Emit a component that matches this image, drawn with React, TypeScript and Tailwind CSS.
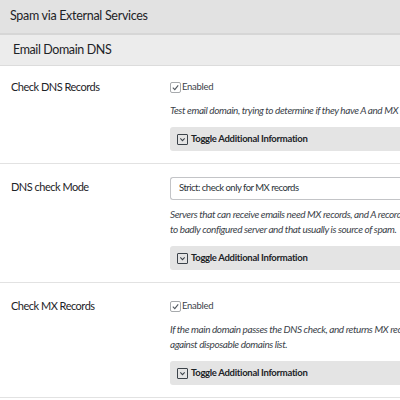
import React from 'react'

const font = { fontFamily: 'Lato, "Open Sans", sans-serif' }

// small gray checkbox, always checked
const CheckBox = () => (
    <span className="inline-flex h-[11px] w-[11px] items-center justify-center rounded-[2px] border border-[#a7aaad] bg-white">
        <svg width="9" height="9" viewBox="0 0 10 10">
            <path d="M2 5.2 L4.2 7.4 L8 2.6" fill="none" stroke="#50575e" strokeWidth="1.2" />
        </svg>
    </span>
)

const ToggleIcon = () => (
    <span className="inline-flex h-[11px] w-[11px] items-center justify-center rounded-[1px] border border-[#3c434a]">
        <svg width="7" height="7" viewBox="0 0 8 8">
            <path d="M1.5 2.8 L4 5.3 L6.5 2.8" fill="none" stroke="#3c434a" strokeWidth="1.2" />
        </svg>
    </span>
)

const Toggle = () => (
    <div className="mt-[9px] flex h-[24px] w-[240px] items-center gap-[3px] rounded-l-[3px] bg-[#e4e4e4] pl-[7px]">
        <ToggleIcon />
        <span className="text-[9.5px] font-bold tracking-[-0.3px] text-[#1d2327]">Toggle Additional Information</span>
    </div>
)

interface RowProps {
    label: string
    children: React.ReactNode
    lines: string[]
    first?: boolean
}

const Row: React.FC<RowProps> = ({ label, children, lines, first }) => (
    <div className={`flex border-b border-[#e2e2e2] pb-[12px] ${first ? 'pt-[12px]' : 'pt-[14px]'}`}>
        <div className="w-[170px] shrink-0 pl-[11px] pt-[1px] text-[11px] leading-[16px] tracking-[-0.5px] text-[#1d2327]">
            {label}
        </div>
        <div className="w-[240px] shrink-0">
            {children}
            <div className="mt-[7px] text-[10px] italic leading-[15px] tracking-[-0.4px] text-[#3c434a] whitespace-nowrap">
                {lines.map((l) => (
                    <div key={l}>{l}</div>
                ))}
            </div>
            <Toggle />
        </div>
    </div>
)

const Enabled = () => (
    <div className="flex h-[18px] items-center gap-[1px] text-[9.5px] tracking-[-0.3px] text-[#3c434a]">
        <CheckBox />
        <span>Enabled</span>
    </div>
)

export default function App() {
    return (
        <div className="h-[400px] w-[400px] overflow-hidden bg-white" style={font}>
            <div className="flex h-[35px] items-center border-b-2 border-[#d6d6d6] bg-[#e2e2e2] pl-[10px] text-[12.5px] tracking-[-0.3px] text-[#1d2327]">
                Spam via External Services
            </div>
            <div className="flex h-[31px] items-center border-b border-[#dcdcdc] bg-[#ececec] pl-[13px] text-[12.5px] tracking-[-0.4px] text-[#1d2327]">
                Email Domain DNS
            </div>
            <Row first label="Check DNS Records" lines={['Test email domain, trying to determine if they have A and MX DNS records.']}>
                <Enabled />
            </Row>
            <Row
                label="DNS check Mode"
                lines={[
                    'Servers that can receive emails need MX records, and A record is used as fallback',
                    'to badly configured server and that usually is source of spam.',
                ]}
            >
                <div className="-mt-[1px] flex h-[23px] w-[240px] items-center rounded-l-[3px] border border-r-0 border-[#c3c4c7] pl-[8px] text-[9.5px] tracking-[-0.5px] text-[#2c3338]">
                    Strict: check only for MX records
                </div>
            </Row>
            <Row
                label="Check MX Records"
                lines={[
                    'If the main domain passes the DNS check, and returns MX records, check those',
                    'against disposable domains list.',
                ]}
            >
                <Enabled />
            </Row>
        </div>
    )
}
